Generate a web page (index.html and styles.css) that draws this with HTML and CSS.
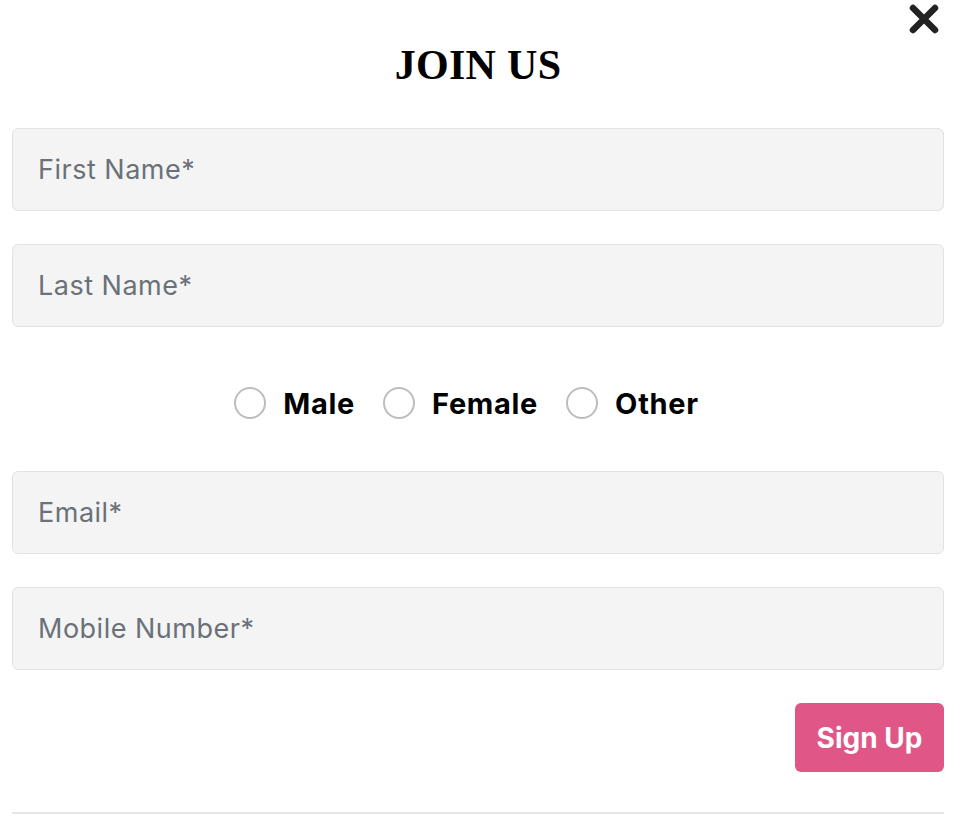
FILE: index.html
```html
<!DOCTYPE html>
<html lang="en">
<head>
<meta charset="utf-8">
<title>Join Us</title>
<link rel="stylesheet" href="styles.css">
</head>
<body>
<div class="modal">
  <button class="close" aria-label="Close">
    <svg width="32" height="32" viewBox="0 0 32 32"><path d="M5 5 L27 27 M27 5 L5 27" stroke="#222" stroke-width="6.5" stroke-linecap="round"/></svg>
  </button>
  <h1 class="title">JOIN US</h1>
  <form class="form">
    <input class="field" type="text" placeholder="First Name*">
    <input class="field" type="text" placeholder="Last Name*">
    <div class="gender">
      <label class="opt"><span class="radio"></span><span class="opt-label">Male</span></label>
      <label class="opt"><span class="radio"></span><span class="opt-label">Female</span></label>
      <label class="opt"><span class="radio"></span><span class="opt-label">Other</span></label>
    </div>
    <input class="field" type="email" placeholder="Email*">
    <input class="field" type="tel" placeholder="Mobile Number*">
    <div class="actions"><button type="button" class="submit">Sign Up</button></div>
  </form>
  <hr class="divider">
</div>
</body>
</html>
```
FILE: styles.css
```css
* { box-sizing: border-box; }
body { margin: 0; background: #fff; font-family: Inter, "Noto Sans", sans-serif; }
.modal { position: relative; padding: 0 22px 0 12px; }
.close { position: absolute; top: 3px; right: 26px; background: none; border: 0; padding: 0; width: 32px; height: 32px; cursor: pointer; }
.close svg { display: block; }
.title { margin: 0; height: 128px; padding-top: 41px; text-align: center; font-family: "Liberation Serif", serif; font-weight: 700; font-size: 42px; line-height: 48px; letter-spacing: 0.3px; color: #000; }
.form { display: flex; flex-direction: column; gap: 33px; }
.field { display: block; width: 100%; height: 83px; background: #f4f4f4; border: 1px solid #e2e2e2; border-radius: 6px; padding: 0 25px; font-family: Inter, sans-serif; font-size: 27px; letter-spacing: 0.5px; color: #333; outline: none; }
.field::placeholder { color: #6b7178; }
.gender { height: 78px; display: flex; justify-content: center; align-items: center; gap: 28px; padding-top: 8px; padding-right: 23px; }
.opt { display: flex; align-items: center; gap: 17px; cursor: pointer; }
.radio { width: 32px; height: 32px; border: 2px solid #bdbdbd; border-radius: 50%; background: #fff; }
.opt-label { font-weight: 700; font-size: 29px; color: #000; letter-spacing: 0.7px; }
.actions { display: flex; justify-content: flex-end; }
.submit { width: 149px; height: 69px; background: #e05787; color: #fff; border: 0; border-radius: 6px; font-family: Inter, sans-serif; font-weight: 700; font-size: 28px; cursor: pointer; }
.divider { margin: 40px 0 0; border: 0; border-top: 2px solid #e6e6e6; }
```
